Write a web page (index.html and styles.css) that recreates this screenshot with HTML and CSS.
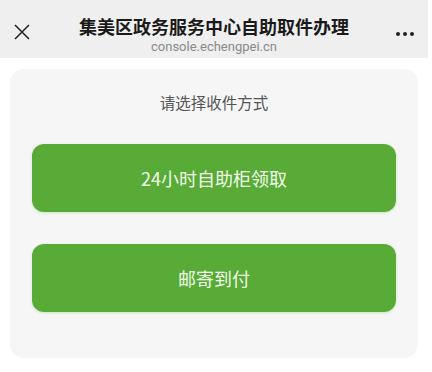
FILE: index.html
```html
<!DOCTYPE html>
<html>

<head>
  <meta charset="UTF-8">
  <meta name="viewport" content="width=device-width, initial-scale=1">
  <title>集美区政务服务中心自助取件办理</title>
  <link rel="stylesheet" href="styles.css">
</head>

<body>
  <div class="topbar">
    <div class="close">
      <svg width="16" height="16" viewBox="0 0 16 16">
        <path d="M1 1 L15 15 M15 1 L1 15" stroke="#222" stroke-width="1.5" fill="none" />
      </svg>
    </div>
    <div class="titles">
      <h1 class="title">集美区政务服务中心自助取件办理</h1>
      <p class="url">console.echengpei.cn</p>
    </div>
    <div class="more">
      <span class="dot"></span><span class="dot"></span><span class="dot"></span>
    </div>
  </div>
  <div class="page">
    <div class="card">
      <p class="hint">请选择收件方式</p>
      <button class="option">24小时自助柜领取</button>
      <button class="option">邮寄到付</button>
    </div>
  </div>
</body>

</html>
```

FILE: styles.css
```css
*{
  padding: 0;
  margin: 0;
  box-sizing: border-box;
}

body{
  font-family: "Noto Sans CJK SC", "Noto Sans", sans-serif;
  background: #fff;
  width: 432px;
}

.topbar{
  width: 428px;
  height: 58px;
  background: #efefef;
  display: flex;
  align-items: center;
  padding: 0 14px 0 14px;
}

.close{
  width: 20px;
  display: flex;
  align-items: center;
  padding-top: 6px;
}

.titles{
  flex: 1;
  text-align: center;
  padding-top: 12px;
}

.title{
  font-size: 18px;
  font-weight: bold;
  color: #1a1a1a;
  line-height: 24px;
}

.url{
  font-size: 13px;
  color: #8a8a8a;
  line-height: 18px;
  font-family: "Roboto", "Noto Sans", sans-serif;
}

.more{
  width: 20px;
  display: flex;
  gap: 3px;
  padding-top: 10px;
  justify-content: flex-end;
}

.dot{
  width: 4px;
  height: 4px;
  border-radius: 50%;
  background: #222;
}

.page{
  padding: 11px 14px 0 10px;
}

.card{
  background: #f6f6f6;
  border-radius: 14px;
  padding: 22px 22px 46px 22px;
  display: flex;
  flex-direction: column;
  gap: 32px;
}

.hint{
  text-align: center;
  font-size: 15.5px;
  color: #555;
  line-height: 22px;
  margin-bottom: -1px;
}

.option{
  height: 68px;
  border: none;
  border-radius: 12px;
  background: #58ab37;
  color: #f2fbe9;
  font-family: "Noto Sans CJK SC", "Noto Sans", sans-serif;
  font-size: 18px;
  box-shadow: 0 1px 3px rgba(120, 200, 90, 0.35);
}
```
